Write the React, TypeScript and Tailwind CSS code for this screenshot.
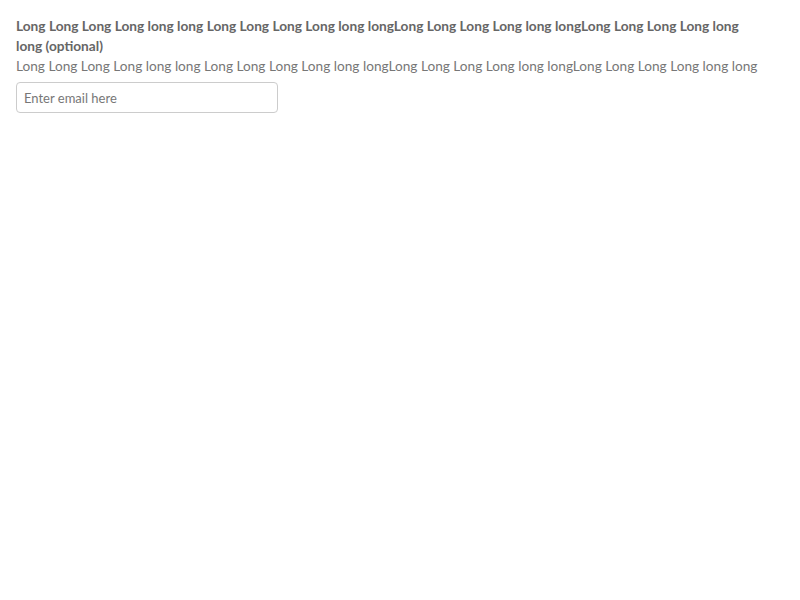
import React from "react";

const App = () => {
  return (
    <div className="p-4 font-['Lato',sans-serif] bg-white min-h-screen">
      <div className="max-w-[746px] flex flex-col">
        <label htmlFor="email" className="text-[13.7px] leading-5 font-bold text-[#666]">
          Long Long Long Long long long Long Long Long Long long longLong Long Long Long long longLong Long Long Long long long (optional)
        </label>
        <p className="text-[13.65px] leading-5 text-[#777]">
          Long Long Long Long long long Long Long Long Long long longLong Long Long Long long longLong Long Long Long long long
        </p>
        <input
          id="email"
          type="email"
          placeholder="Enter email here"
          className="mt-1.5 w-[262px] h-[31px] px-[7px] text-[13px] text-[#555] placeholder:text-[#777] border border-[#ccc] rounded-[4px] outline-none"
        />
      </div>
    </div>
  );
};

export default App;
